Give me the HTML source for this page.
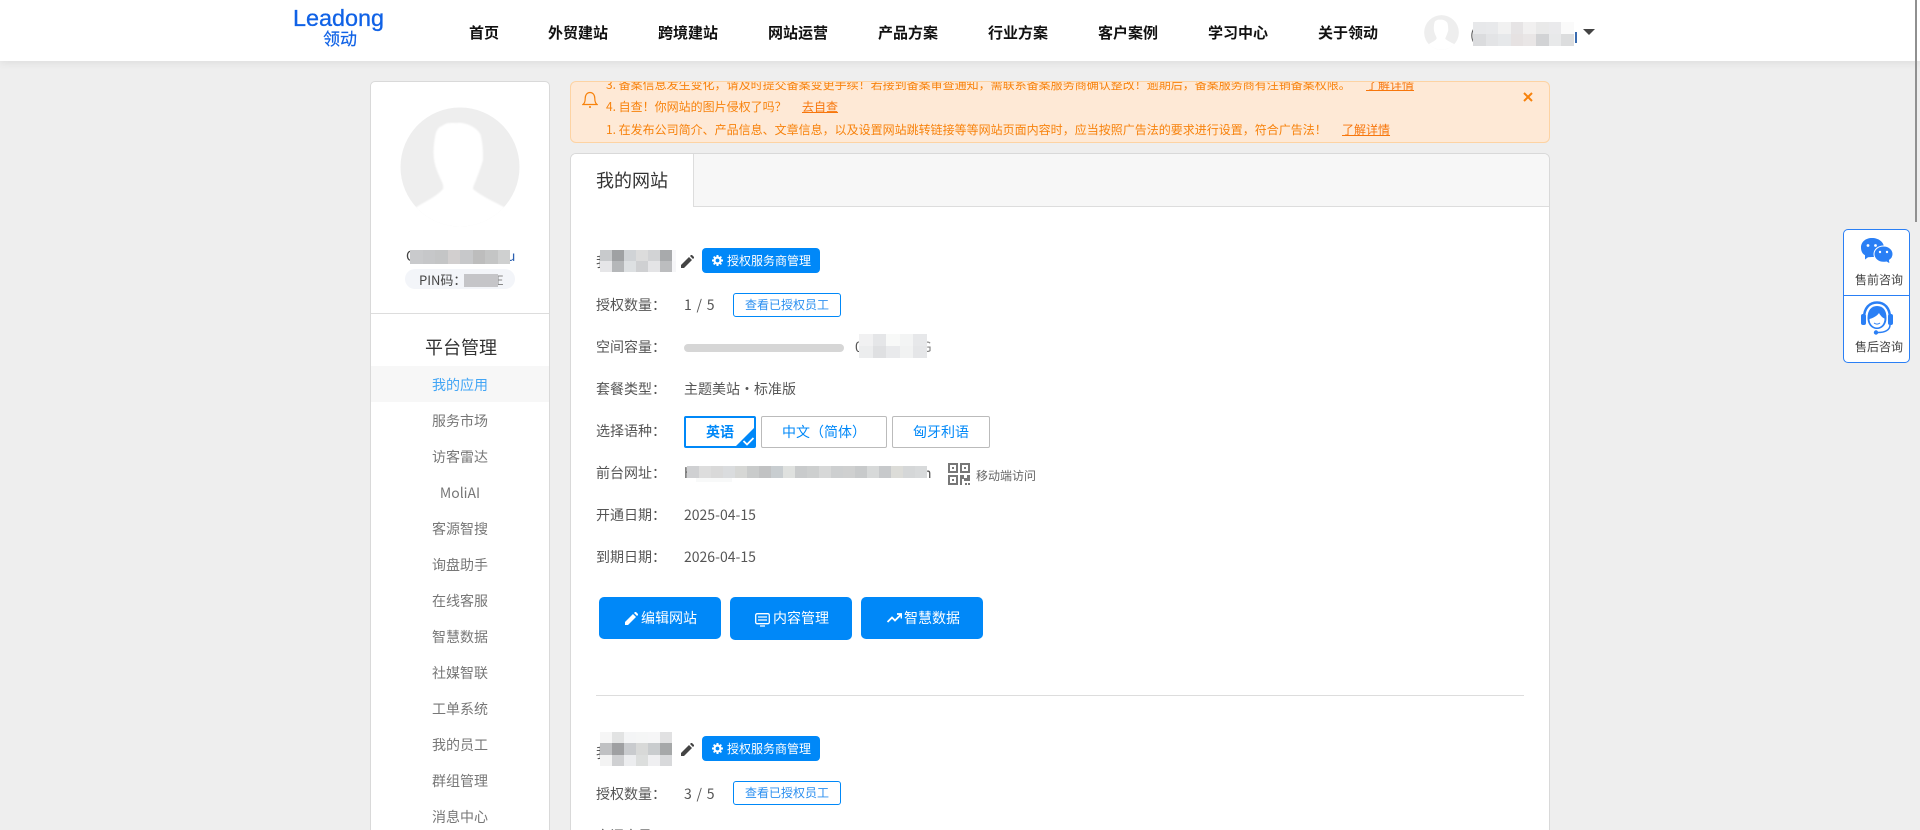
<!DOCTYPE html>
<html lang="zh">
<head>
<meta charset="utf-8">
<title>我的网站</title>
<style>
html,body{margin:0;padding:0;width:1920px;height:830px;overflow:hidden;background:#eee;font-family:"Noto Sans CJK SC","Liberation Sans",sans-serif;color:#555;font-size:14px}
#root{position:relative;width:1920px;height:830px;overflow:hidden;contain:paint}
.a{position:absolute}
.t{position:absolute;white-space:nowrap;line-height:20px}
.m{position:absolute;display:grid;grid-auto-flow:row}
.m i{display:block}
.nav{position:absolute;top:23px;line-height:20px;font-size:15px;font-weight:700;color:#111;white-space:nowrap}
.menu{position:absolute;left:371px;width:178px;text-align:center;line-height:20px;color:#777;font-size:14px}
.n{position:absolute;left:606px;font-size:12px;line-height:18px;color:#f7820c;white-space:nowrap}
.n u{color:#f7760c}
.tag{position:absolute;left:702px;width:118px;height:25px;background:#0088f8;border-radius:4px;color:#fff;font-size:12px;line-height:25px}
.tag span{position:absolute;left:25px}
.tag svg{position:absolute;left:10px;top:7px}
.ob{position:absolute;left:733px;width:106px;height:22px;border:1px solid #0088f8;border-radius:3px;color:#2b8ff0;font-size:12px;line-height:22px;text-align:center;background:#fff}
.lang{position:absolute;top:416px;height:30px;border:1px solid #bbb;border-radius:2px;color:#0088f8;line-height:30px;text-align:center;font-size:14px;background:#fff}
.btn{position:absolute;top:597px;width:122px;height:42px;background:#0088f8;border-radius:5px;color:#fff;font-size:14px;line-height:42px}
.btn span{position:absolute;white-space:nowrap}
.btn svg{position:absolute}
</style>
</head>
<body>
<div id="root">
<!-- main left card -->
<div class="a" style="left:370px;top:81px;width:180px;height:760px;background:#fff;border:1px solid #d9d9d9;border-radius:5px;box-sizing:border-box"></div>
<div class="a" style="left:371px;top:313px;width:178px;height:1px;background:#ddd"></div>
<svg class="a" style="left:400px;top:107px" width="120" height="120" viewBox="0 0 120 120">
<defs><filter id="b1"><feGaussianBlur stdDeviation="0.8"/></filter><clipPath id="c1"><circle cx="60" cy="60" r="59.5"/></clipPath></defs>
<g clip-path="url(#c1)">
<rect width="120" height="120" fill="#eee"/>
<path d="M15 101C24 95 36 90 43 82C44 78 42 75 41 73C38 66 35 60 34 52C33 44 34 36 35 30C36 24 38 20 42 19C47 15 52 16 57 16C62 15 68 17 73 20C78 23 81 27 81 30C83 38 83 46 83 53C81 60 78 68 76 73C75 76 73 79 73 82C80 88 92 94 104 100L106 125L15 125Z" fill="#fff" filter="url(#b1)"/>
</g>
</svg>
<div class="t" style="left:406px;top:246px;color:#444;font-size:14px">C</div>
<div class="t" style="left:507px;top:246px;color:#2b5fb0;font-size:14px">u</div>
<div class="m" style="left:410px;top:250px;grid-template-columns:repeat(8,12.5px);grid-auto-rows:14px"><i style="background:#c9cacc"></i><i style="background:#c6c7c9"></i><i style="background:#c4c5c6"></i><i style="background:#d2cfcf"></i><i style="background:#c7c8ca"></i><i style="background:#bdbdbd"></i><i style="background:#c4c5c5"></i><i style="background:#cfd0d0"></i></div>
<div class="a" style="left:405px;top:269px;width:110px;height:20px;background:#f3f5f9;border-radius:10px"></div>
<div class="t" style="left:419px;top:270px;font-size:13px;color:#444">PIN码：</div>
<div class="a" style="left:464px;top:274px;width:34px;height:13px;background:#c5c5c8"></div>
<div class="t" style="left:496px;top:270px;font-size:13px;color:#888">E</div>
<div class="a" style="left:464px;top:274px;width:34px;height:13px;background:#c5c5c8"></div>
<div class="t" style="left:425px;top:337px;font-size:18px;color:#333">平台管理</div>
<div class="a" style="left:371px;top:366px;width:178px;height:36px;background:#f7f7f7"></div>
<div class="menu" style="top:375px;color:#42a5f5">我的应用</div>
<div class="menu" style="top:411px">服务市场</div>
<div class="menu" style="top:447px">访客雷达</div>
<div class="menu" style="top:483px">MoliAI</div>
<div class="menu" style="top:519px">客源智搜</div>
<div class="menu" style="top:555px">询盘助手</div>
<div class="menu" style="top:591px">在线客服</div>
<div class="menu" style="top:627px">智慧数据</div>
<div class="menu" style="top:663px">社媒智联</div>
<div class="menu" style="top:699px">工单系统</div>
<div class="menu" style="top:735px">我的员工</div>
<div class="menu" style="top:771px">群组管理</div>
<div class="menu" style="top:807px">消息中心</div>

<!-- notice -->
<div class="a" style="left:570px;top:81px;width:980px;height:62px;background:#fee9d6;border:1px solid #fdd3a3;border-radius:6px;box-sizing:border-box;overflow:hidden">
<div class="n" style="left:35px;top:-6px">3. 备案信息发生变化，请及时提交备案变更手续！若接到备案审查通知，需联系备案服务商确认整改！逾期后，备案服务商有注销备案权限。</div>
<div class="n" style="left:795px;top:-6px"><u>了解详情</u></div>
<div class="n" style="left:35px;top:16px">4. 自查！你网站的图片侵权了吗？</div>
<div class="n" style="left:231px;top:16px"><u>去自查</u></div>
<div class="n" style="left:35px;top:39px">1. 在发布公司简介、产品信息、文章信息，以及设置网站跳转链接等等网站页面内容时，应当按照广告法的要求进行设置，符合广告法！</div>
<div class="n" style="left:771px;top:39px"><u>了解详情</u></div>
</div>
<svg class="a" style="left:582px;top:91px" width="16" height="18" viewBox="0 0 16 18" fill="none" stroke="#f7820c" stroke-width="1.2"><path d="M1 13.5C3 12 3.2 10 3.2 7.5C3.2 4 5 1.5 8 1.5C11 1.5 12.8 4 12.8 7.5C12.8 10 13 12 15 13.5Z"/><circle cx="8" cy="16" r="1" fill="#f7820c" stroke="none"/></svg>
<svg class="a" style="left:1523px;top:92px" width="10" height="10" viewBox="0 0 10 10" stroke="#f7820c" stroke-width="2"><path d="M1 1L9 9M9 1L1 9"/></svg>

<!-- main card -->
<div class="a" style="left:570px;top:153px;width:980px;height:700px;background:#fff;border:1px solid #d9d9d9;border-radius:6px;box-sizing:border-box;overflow:hidden">
<div class="a" style="left:0;top:0;width:978px;height:52px;background:#f7f7f7;border-bottom:1px solid #ddd"></div>
<div class="a" style="left:0;top:0;width:122px;height:53px;background:#fff;border-right:1px solid #ddd"></div>
</div>
<div class="t" style="left:596px;top:170px;font-size:18px;color:#333">我的网站</div>

<!-- site 1 -->
<div class="t" style="left:596px;top:252px">我</div>
<div class="m" style="left:600px;top:250px;grid-template-columns:repeat(6,12px) 4px;grid-auto-rows:11px"><i style="background:#c8cacc"></i><i style="background:#9fa1a3"></i><i style="background:#d0d3d6"></i><i style="background:#dcdcdc"></i><i style="background:#d2d3d5"></i><i style="background:#a8aaac"></i><i style="background:#f8f8fa"></i><i style="background:#e6e6e8"></i><i style="background:#b5b7b9"></i><i style="background:#dde0e2"></i><i style="background:#cfd0d2"></i><i style="background:#e4e4e6"></i><i style="background:#bcbdbf"></i><i style="background:#f6f6f8"></i></div>
<svg class="a" style="left:681px;top:255px" width="13" height="13" viewBox="0 0 13 13" fill="#444"><path d="M0 13V10L8 2L11 5L3 13ZM9 1L10 0Q10.500-.2 11 0L13 2Q13.200 2.500 13 3L12 4Z"/></svg>
<div class="tag" style="top:248px"><svg width="11" height="11" viewBox="0 0 11 11" fill="#fff"><circle cx="5.500" cy="5.500" r="3" fill="none" stroke="#fff" stroke-width="2.200"/><path d="M4.500 0H6.500V2H4.500ZM4.500 9H6.500V11H4.500ZM0 4.500H2V6.500H0ZM9 4.500H11V6.500H9ZM1 2.200L2.300 1L3.500 2.300L2.200 3.500ZM7.500 8.700L8.700 7.500L10 8.800L8.800 10ZM8.700 1L10 2.200L8.700 3.500L7.500 2.300ZM2.200 7.500L3.500 8.700L2.300 10L1 8.800Z"/></svg><span>授权服务商管理</span></div>
<div class="t" style="left:596px;top:295px">授权数量：</div>
<div class="t" style="left:684px;top:295px;letter-spacing:.8px">1 / 5</div>
<div class="ob" style="top:293px">查看已授权员工</div>
<div class="t" style="left:596px;top:337px">空间容量：</div>
<div class="a" style="left:684px;top:344px;width:160px;height:8px;background:#d6d6d6;border-radius:4px"></div>
<div class="t" style="left:855px;top:337px">0</div>
<div class="t" style="left:922px;top:337px;color:#888">G</div>
<div class="m" style="left:859px;top:334px;grid-template-columns:repeat(5,13.600px);grid-auto-rows:12px"><i style="background:#f1f1f2"></i><i style="background:#e5e6e8"></i><i style="background:#f8f9f8"></i><i style="background:#f3f4f4"></i><i style="background:#e7e8ea"></i><i style="background:#ecedee"></i><i style="background:#dfe0e2"></i><i style="background:#e9eaec"></i><i style="background:#f1f2f2"></i><i style="background:#e5e6e8"></i></div>
<div class="t" style="left:596px;top:379px">套餐类型：</div>
<div class="t" style="left:684px;top:379px">主题美站・标准版</div>
<div class="t" style="left:596px;top:421px">选择语种：</div>
<div class="lang" style="left:684px;width:68px;border:2px solid #0088f8;height:28px;line-height:28px;font-weight:700;overflow:hidden">英语<svg class="a" style="right:-2px;bottom:-2px" width="22" height="22" viewBox="0 0 22 22"><path d="M22 0V22H0Z" fill="#0088f8"/><path d="M9.500 15L13 18.500L19.500 12" fill="none" stroke="#fff" stroke-width="1.800"/></svg></div>
<div class="lang" style="left:761px;width:124px">中文（简体）</div>
<div class="lang" style="left:892px;width:96px">匈牙利语</div>
<div class="t" style="left:596px;top:463px">前台网址：</div>
<div class="t" style="left:684px;top:463px">h</div>
<div class="t" style="left:923px;top:463px">n</div>
<div class="m" style="left:687px;top:466px;grid-template-columns:repeat(20,12px);grid-auto-rows:12px"><i style="background:#cfd0d2"></i><i style="background:#dddddd"></i><i style="background:#d9d9d9"></i><i style="background:#dadcde"></i><i style="background:#d6d7d5"></i><i style="background:#c9cbcb"></i><i style="background:#c1c2c3"></i><i style="background:#c8cdd0"></i><i style="background:#dfe1df"></i><i style="background:#c9cbcc"></i><i style="background:#cdcfcf"></i><i style="background:#d7d8d8"></i><i style="background:#cdcfd0"></i><i style="background:#cfd0d0"></i><i style="background:#c8cacb"></i><i style="background:#d7d9d9"></i><i style="background:#c7c9cb"></i><i style="background:#dcdcd8"></i><i style="background:#d5d7d8"></i><i style="background:#d8dadb"></i></div>
<div class="a" style="left:696px;top:478px;width:36px;height:4px;background:#f8f9f9"></div>
<svg class="a" style="left:948px;top:463px" width="22" height="22" viewBox="0 0 22 22" fill="#777"><path d="M0 0H10V10H0ZM2 2V8H8V2ZM4 4H6V6H4ZM12 0H22V10H12ZM14 2V8H20V2ZM16 4H18V6H16ZM0 12H10V22H0ZM2 14V20H8V14ZM4 16H6V18H4ZM12 12H16V15H19V12H22V18H16V16H14V22H12ZM17 20H19V22H17ZM20 20H22V22H20Z" fill-rule="evenodd"/></svg>
<div class="t" style="left:976px;top:466px;font-size:12px;color:#666">移动端访问</div>
<div class="t" style="left:596px;top:505px">开通日期：</div>
<div class="t" style="left:684px;top:505px">2025-04-15</div>
<div class="t" style="left:596px;top:547px">到期日期：</div>
<div class="t" style="left:684px;top:547px">2026-04-15</div>
<div class="btn" style="left:599px"><svg style="left:26px;top:15px" width="13" height="13" viewBox="0 0 13 13" fill="#fff"><path d="M0 13V10L8 2L11 5L3 13ZM9 1L10 0Q10.500-.2 11 0L13 2Q13.200 2.500 13 3L12 4Z"/></svg><span style="left:42px">编辑网站</span></div>
<div class="btn" style="left:730px;height:43px"><svg style="left:25px;top:16px" width="15" height="14" viewBox="0 0 15 14" fill="none" stroke="#fff" stroke-width="1.300"><rect x=".7" y=".7" width="13.600" height="10" rx="1.500"/><path d="M3 4H12M3 7H12M5 13H10"/></svg><span style="left:43px">内容管理</span></div>
<div class="btn" style="left:861px"><svg style="left:26px;top:16px" width="15" height="10" viewBox="0 0 15 10" fill="none" stroke="#fff" stroke-width="1.800"><path d="M.5 9L5 4.500L8 7.500L14 1.500M10 1H14.500V5.500"/></svg><span style="left:43px">智慧数据</span></div>
<div class="a" style="left:596px;top:695px;width:928px;height:1px;background:#ddd"></div>

<!-- site 2 -->
<div class="t" style="left:596px;top:743px">我</div>
<div class="m" style="left:600px;top:732px;grid-template-columns:repeat(6,12px);grid-auto-rows:11.400px"><i style="background:#f6f6f6"></i><i style="background:#e2e3e3"></i><i style="background:#f4f5f6"></i><i style="background:#f5f6f6"></i><i style="background:#f6f6f7"></i><i style="background:#e1e1e2"></i><i style="background:#c0c1c3"></i><i style="background:#9fa0a2"></i><i style="background:#c9cbce"></i><i style="background:#d8d9d8"></i><i style="background:#c9ccce"></i><i style="background:#a6a8a9"></i><i style="background:#f3f3f3"></i><i style="background:#cfd0d2"></i><i style="background:#ecedef"></i><i style="background:#dcdedd"></i><i style="background:#efeff1"></i><i style="background:#d8d9db"></i></div>
<svg class="a" style="left:681px;top:743px" width="13" height="13" viewBox="0 0 13 13" fill="#444"><path d="M0 13V10L8 2L11 5L3 13ZM9 1L10 0Q10.500-.2 11 0L13 2Q13.200 2.500 13 3L12 4Z"/></svg>
<div class="tag" style="top:736px"><svg width="11" height="11" viewBox="0 0 11 11" fill="#fff"><circle cx="5.500" cy="5.500" r="3" fill="none" stroke="#fff" stroke-width="2.200"/><path d="M4.500 0H6.500V2H4.500ZM4.500 9H6.500V11H4.500ZM0 4.500H2V6.500H0ZM9 4.500H11V6.500H9ZM1 2.200L2.300 1L3.500 2.300L2.200 3.500ZM7.500 8.700L8.700 7.500L10 8.800L8.800 10ZM8.700 1L10 2.200L8.700 3.500L7.500 2.300ZM2.200 7.500L3.500 8.700L2.300 10L1 8.800Z"/></svg><span>授权服务商管理</span></div>
<div class="t" style="left:596px;top:784px">授权数量：</div>
<div class="t" style="left:684px;top:784px;letter-spacing:.8px">3 / 5</div>
<div class="ob" style="top:781px">查看已授权员工</div>
<div class="t" style="left:596px;top:826px">空间容量：</div>

<!-- header -->
<div class="a" style="left:0;top:0;width:1920px;height:61px;background:#fff;box-shadow:0 2px 8px rgba(0,0,0,.07)"></div>
<div class="t" style="left:293px;top:6px;font-family:'Liberation Sans',sans-serif;font-size:23.400px;line-height:24px;color:#1062e6;-webkit-text-stroke:.3px #1062e6">Leadong</div>
<div class="t" style="left:323px;top:28px;font-size:17px;line-height:20px;color:#1062e6;-webkit-text-stroke:.2px #1062e6">领动</div>
<div class="nav" style="left:469px">首页</div>
<div class="nav" style="left:548px">外贸建站</div>
<div class="nav" style="left:658px">跨境建站</div>
<div class="nav" style="left:768px">网站运营</div>
<div class="nav" style="left:878px">产品方案</div>
<div class="nav" style="left:988px">行业方案</div>
<div class="nav" style="left:1098px">客户案例</div>
<div class="nav" style="left:1208px">学习中心</div>
<div class="nav" style="left:1318px">关于领动</div>
<svg class="a" style="left:1424px;top:15px" width="35" height="35" viewBox="0 0 120 120">
<defs><clipPath id="c2"><circle cx="60" cy="60" r="59.500"/></clipPath></defs>
<g clip-path="url(#c2)"><rect width="120" height="120" fill="#eee"/>
<path d="M15 101C24 95 36 90 43 82C44 78 42 75 41 73C38 66 35 60 34 52C33 44 34 36 35 30C36 24 38 20 42 19C47 15 52 16 57 16C62 15 68 17 73 20C78 23 81 27 81 30C83 38 83 46 83 53C81 60 78 68 76 73C75 76 73 79 73 82C80 88 92 94 104 100L106 125L15 125Z" fill="#fff"/></g>
</svg>
<div class="t" style="left:1470px;top:25px;color:#555;font-size:14px">(</div>
<div class="a" style="left:1575px;top:32px;width:1.500px;height:11px;background:#3a6cb0"></div>
<div class="m" style="left:1473px;top:22px;grid-template-columns:repeat(8,12.600px);grid-auto-rows:12px"><i style="background:#e7e8ea"></i><i style="background:#e8e9eb"></i><i style="background:#f1f1f1"></i><i style="background:#e6e4e5"></i><i style="background:#f1f0f0"></i><i style="background:#e9e9e9"></i><i style="background:#eaeaec"></i><i style="background:#fafafa"></i><i style="background:#dbdcde"></i><i style="background:#e3e4e6"></i><i style="background:#e6e8ea"></i><i style="background:#e6e2e2"></i><i style="background:#e9e6e6"></i><i style="background:#d2d3d5"></i><i style="background:#e8e9ea"></i><i style="background:#dcddde"></i></div>
<svg class="a" style="left:1583px;top:29px" width="12" height="6" viewBox="0 0 12 6" fill="#444"><path d="M0 0H12L6 6Z"/></svg>

<!-- side widget -->
<div class="a" style="left:1843px;top:229px;width:67px;height:134px;background:#fff;border:1px solid #2a7ff5;border-radius:5px;box-sizing:border-box"></div>
<div class="a" style="left:1844px;top:295px;width:65px;height:1px;background:#2a7ff5"></div>
<svg class="a" style="left:1860px;top:237px" width="34" height="28" viewBox="0 0 34 28">
<path d="M12 1C18.600 1 24 5 24 10.500C24 16 18.600 20 12 20L8 20.200L5 22.500L5 18.300C2 16.500 1 13.500 1 10.500C1 5 5.400 1 12 1Z" fill="#2a7ff5"/>
<circle cx="8" cy="8.500" r="1.400" fill="#fff"/><circle cx="15.500" cy="8.500" r="1.400" fill="#fff"/>
<path d="M23.500 9C28.800 9 33 12.500 33 17C33 19.700 31.700 21.800 29.500 23.200L30 27L26.500 25C25.500 25.200 24.500 25.300 23.500 25.300C18.200 25.300 14 21.600 14 17C14 12.500 18.200 9 23.500 9Z" fill="#2a7ff5" stroke="#fff" stroke-width="1"/>
<circle cx="20" cy="15" r="1.200" fill="#fff"/><circle cx="27" cy="15" r="1.200" fill="#fff"/>
</svg>
<div class="t" style="left:1855px;top:270px;font-size:12px;color:#444">售前咨询</div>
<svg class="a" style="left:1860px;top:300px" width="34" height="36" viewBox="0 0 34 36">
<path d="M4 18C4 8 9.500 2.500 17 2.500C24.500 2.500 30 8 30 18" fill="none" stroke="#2a7ff5" stroke-width="2.500"/>
<path d="M7.500 18C7.500 10 11.500 6 17 6C23 6 26.500 10 26.500 18C26.500 25 22 29 17 29C12 29 7.500 25 7.500 18Z" fill="#2a7ff5"/>
<path d="M9.500 19C13 18 17 16 19 13C20.500 16 23 18 24.500 18.500C24.500 24 21 27.500 17 27.500C13 27.500 9.500 24 9.500 19Z" fill="#fff"/>
<rect x="1" y="14" width="5" height="11" rx="2" fill="#2a7ff5"/><rect x="28" y="14" width="5" height="11" rx="2" fill="#2a7ff5"/>
<path d="M30 25C30 30 25 32.500 18 32.500" fill="none" stroke="#2a7ff5" stroke-width="1.500"/>
<circle cx="16" cy="32.500" r="2.200" fill="#2a7ff5"/>
<path d="M14 23C16 24.500 18 24.500 20 23" fill="none" stroke="#2a7ff5" stroke-width="1"/>
</svg>
<div class="t" style="left:1855px;top:337px;font-size:12px;color:#444">售后咨询</div>

<!-- scrollbar -->
<div class="a" style="left:1915px;top:0;width:2px;height:222px;background:#909090"></div>
</div>
</body>
</html>
